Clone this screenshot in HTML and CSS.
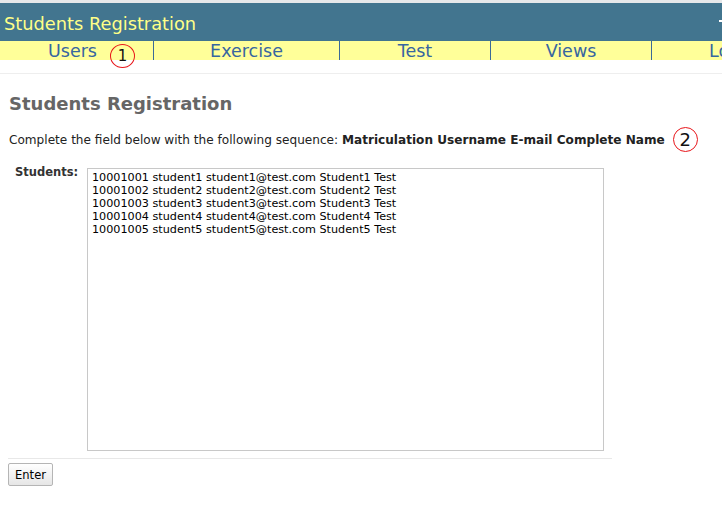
FILE: index.html
```html
<!DOCTYPE html>
<html>
<head>
<meta charset="utf-8">
<link rel="stylesheet" href="styles.css">
</head>
<body>
<div class="topstrip"></div>
<header class="banner">
  <span class="banner-title">Students Registration</span>
  <span class="banner-cut"></span>
</header>
<nav class="menu">
  <div class="menu-item w1"><span>Users</span><span class="mark mark1">1</span></div>
  <div class="menu-item w2"><span>Exercise</span></div>
  <div class="menu-item w3"><span>Test</span></div>
  <div class="menu-item w4"><span>Views</span></div>
  <div class="menu-item w5"><span>Logout</span></div>
</nav>
<div class="rule-top"></div>
<main class="content">
  <h1 class="heading">Students Registration</h1>
  <p class="intro">Complete the field below with the following sequence: <b>Matriculation Username E-mail Complete Name</b><span class="mark mark2">2</span></p>
  <div class="field">
    <label class="field-label" for="students">Students:</label>
    <textarea id="students" class="field-input">10001001 student1 student1@test.com Student1 Test
10001002 student2 student2@test.com Student2 Test
10001003 student3 student3@test.com Student3 Test
10001004 student4 student4@test.com Student4 Test
10001005 student5 student5@test.com Student5 Test</textarea>
  </div>
  <div class="rule-bottom"></div>
  <button class="enter">Enter</button>
</main>
</body>
</html>
```
FILE: styles.css
```css
html, body {
  margin: 0;
  padding: 0;
  background: #ffffff;
  font-family: "DejaVu Sans", Verdana, sans-serif;
  overflow: hidden;
}
.topstrip {
  height: 3px;
  background: #e6e8ea;
}
.banner {
  height: 38px;
  background: #42758f;
  display: flex;
  align-items: center;
  justify-content: space-between;
  padding-left: 4px;
  overflow: hidden;
}
.banner-title {
  color: #ffff88;
  font-size: 17.8px;
  position: relative;
  top: 1px;
}
.banner-cut {
  width: 3px;
  height: 2px;
  background: #ffffff;
  margin-right: 0;
  position: relative;
  top: -1px;
}
.menu {
  display: flex;
  height: 19px;
  background: #ffff99;
  white-space: nowrap;
}
.menu-item {
  flex: none;
  position: relative;
  text-align: center;
  color: #3766a0;
  font-size: 17.5px;
  line-height: 19px;
  border-right: 1px solid #3a6a98;
  box-sizing: border-box;
}
.menu-item > span:first-child {
  position: relative;
  top: 1px;
}
.w1 { width: 154px; padding-right: 8px; }
.w2 { width: 186px; }
.w3 { width: 151px; }
.w4 { width: 161px; }
.w5 { width: 70px; border-right: none; text-align: left; padding-left: 57px; overflow: hidden; }
.mark {
  position: absolute;
  border: 1.3px solid #e8161b;
  border-radius: 50%;
  box-sizing: border-box;
  color: #111;
  font-weight: normal;
  text-align: center;
  font-family: "DejaVu Sans", Verdana, sans-serif;
}
.mark1 {
  left: 110px;
  top: 3px;
  width: 25px;
  height: 24px;
  font-size: 15px;
  line-height: 22px;
  z-index: 2;
}
.rule-top {
  height: 1px;
  margin-top: 13px;
  background: #eeeeee;
}
.content {
  padding: 0 0 0 9px;
}
.heading {
  margin: 20px 0 0 0;
  font-size: 18px;
  line-height: 20px;
  font-weight: bold;
  color: #666666;
}
.intro {
  position: relative;
  margin: 18px 0 0 0;
  font-size: 12.1px;
  line-height: 16px;
  color: #222222;
}
.mark2 {
  top: -5px;
  margin-left: 8px;
  width: 25px;
  height: 25px;
  font-size: 18px;
  line-height: 23px;
}
.field {
  display: flex;
  margin-top: 20px;
}
.field-label {
  width: 78px;
  box-sizing: border-box;
  padding-left: 6px;
  margin-top: -3px;
  font-size: 11.5px;
  font-weight: bold;
  color: #333333;
}
.field-input {
  width: 517px;
  height: 283px;
  box-sizing: border-box;
  border: 1px solid #c8c8c8;
  padding: 2px 4px;
  margin: 0;
  resize: none;
  font-family: "DejaVu Sans", Verdana, sans-serif;
  font-size: 11.2px;
  line-height: 13px;
  color: #000;
  outline: none;
}
.rule-bottom {
  width: 604px;
  height: 1px;
  margin-top: 7px;
  margin-left: -1px;
  background: #e8e8e8;
}
.enter {
  margin-top: 4px;
  margin-left: -1px;
  width: 45px;
  height: 23px;
  padding: 0;
  font-family: "DejaVu Sans", Verdana, sans-serif;
  font-size: 11.5px;
  color: #000;
  background: linear-gradient(#ffffff, #e6e6e6);
  border: 1px solid #b5b5b5;
  border-radius: 2px;
}
```
